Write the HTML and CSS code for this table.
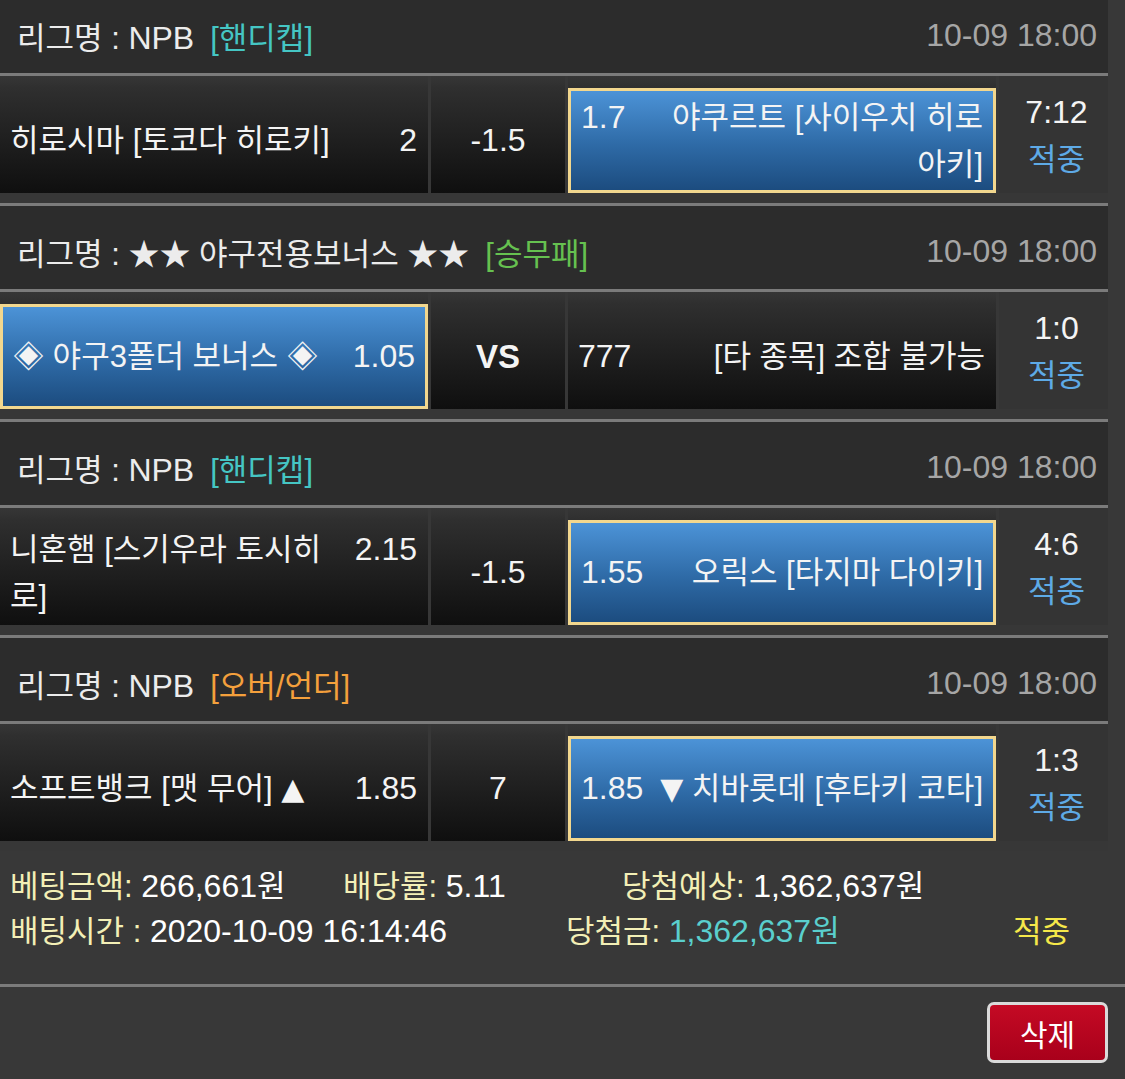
FILE: index.html
```html
<!DOCTYPE html>
<html lang="ko">
<head>
  <meta charset="UTF-8" />
  <meta name="viewport" content="width=device-width, initial-scale=1.0"/>
  <title>배팅내역</title>
  <link rel="stylesheet" href="styles.css">
</head>
<body>

  <div class="slip">

    <div class="game">
      <div class="league">
        <div class="league-title">리그명 : <span class="num">NPB</span><span class="bet-type handi">[핸디캡]</span></div>
        <div class="league-date">10-09 18:00</div>
      </div>
      <div class="match">
        <div class="cell home">
          <div class="cell-body">
            <div class="pick">
              <div class="pick-name">히로시마 [토코다 히로키]</div>
              <div class="pick-odds num">2</div>
            </div>
          </div>
        </div>
        <div class="cell line">
          <div class="cell-body num">-1.5</div>
        </div>
        <div class="cell away">
          <div class="cell-body selected">
            <div class="pick">
              <div class="pick-odds num">1.7</div>
              <div class="pick-name">야쿠르트 [사이우치 히로아키]</div>
            </div>
          </div>
        </div>
        <div class="result">
          <div class="score num">7:12</div>
          <div class="status">적중</div>
        </div>
      </div>
    </div>

    <div class="game">
      <div class="league">
        <div class="league-title">리그명 : ★★ 야구전용보너스 ★★<span class="bet-type wdl">[승무패]</span></div>
        <div class="league-date">10-09 18:00</div>
      </div>
      <div class="match">
        <div class="cell home">
          <div class="cell-body selected">
            <div class="pick">
              <div class="pick-name">◈ 야구3폴더 보너스 ◈</div>
              <div class="pick-odds num">1.05</div>
            </div>
          </div>
        </div>
        <div class="cell line">
          <div class="cell-body vs">VS</div>
        </div>
        <div class="cell away">
          <div class="cell-body">
            <div class="pick">
              <div class="pick-odds num">777</div>
              <div class="pick-name">[타 종목] 조합 불가능</div>
            </div>
          </div>
        </div>
        <div class="result">
          <div class="score num">1:0</div>
          <div class="status">적중</div>
        </div>
      </div>
    </div>

    <div class="game">
      <div class="league">
        <div class="league-title">리그명 : <span class="num">NPB</span><span class="bet-type handi">[핸디캡]</span></div>
        <div class="league-date">10-09 18:00</div>
      </div>
      <div class="match">
        <div class="cell home">
          <div class="cell-body">
            <div class="pick">
              <div class="pick-name">니혼햄 [스기우라 토시히로]</div>
              <div class="pick-odds num">2.15</div>
            </div>
          </div>
        </div>
        <div class="cell line">
          <div class="cell-body num">-1.5</div>
        </div>
        <div class="cell away">
          <div class="cell-body selected">
            <div class="pick">
              <div class="pick-odds num">1.55</div>
              <div class="pick-name">오릭스 [타지마 다이키]</div>
            </div>
          </div>
        </div>
        <div class="result">
          <div class="score num">4:6</div>
          <div class="status">적중</div>
        </div>
      </div>
    </div>

    <div class="game last">
      <div class="league">
        <div class="league-title">리그명 : <span class="num">NPB</span><span class="bet-type ou">[오버/언더]</span></div>
        <div class="league-date">10-09 18:00</div>
      </div>
      <div class="match">
        <div class="cell home">
          <div class="cell-body">
            <div class="pick">
              <div class="pick-name">소프트뱅크 [맷 무어] <span class="arrow">▲</span></div>
              <div class="pick-odds num">1.85</div>
            </div>
          </div>
        </div>
        <div class="cell line">
          <div class="cell-body num">7</div>
        </div>
        <div class="cell away">
          <div class="cell-body selected">
            <div class="pick">
              <div class="pick-odds num">1.85</div>
              <div class="pick-name"><span class="arrow">▼</span> 치바롯데 [후타키 코타]</div>
            </div>
          </div>
        </div>
        <div class="result">
          <div class="score num">1:3</div>
          <div class="status">적중</div>
        </div>
      </div>
    </div>

    <div class="summary">
      <div class="sum-line">
        <div class="sum-item w1">베팅금액: <span class="val num">266,661</span><span class="val">원</span></div>
        <div class="sum-item w2">배당률: <span class="val num">5.11</span></div>
        <div class="sum-item">당첨예상: <span class="val num">1,362,637</span><span class="val">원</span></div>
      </div>
      <div class="sum-line">
        <div class="sum-item w3">배팅시간 : <span class="val num">2020-10-09 16:14:46</span></div>
        <div class="sum-item w4">당첨금: <span class="win num">1,362,637</span><span class="win">원</span></div>
        <div class="sum-item hit">적중</div>
      </div>
    </div>

    <div class="actions">
      <button type="button" class="btn-delete">삭제</button>
    </div>

  </div>

</body>
</html>
```

FILE: styles.css
```css
body {
  margin: 0;
  padding: 0;
  background-color: #383838;
  font-family: 'Liberation Sans', 'Noto Sans CJK KR', sans-serif;
  font-size: 31px;
  color: #f4f4f4;
  overflow: hidden;
}

.slip {
  margin-top: -10px;
}

.num {
  font-size: 32px;
}

.arrow {
  font-family: 'DejaVu Sans', sans-serif;
  font-size: 30px;
}

/* league header */
.game {
  width: 1108px;
}

.league {
  height: 86px;
  box-sizing: border-box;
  padding: 8px 11px 0 17px;
  display: flex;
  align-items: center;
  justify-content: space-between;
  background: #2c2c2c;
  border-bottom: 3px solid #7b7b7b;
  color: #ececec;
}

.bet-type {
  margin-left: 16px;
}

.bet-type.handi { color: #45c6c4; }
.bet-type.wdl { color: #66c150; }
.bet-type.ou { color: #f4a03c; }

.league-date {
  font-size: 32px;
  color: #a6a6a6;
}

/* match row */
.match {
  height: 130px;
  box-sizing: border-box;
  padding-bottom: 10px;
  display: flex;
  gap: 3px;
  background: #373737;
  border-bottom: 3px solid #7b7b7b;
}

.game.last .match {
  height: 127px;
  border-bottom: none;
}

.cell {
  display: flex;
  padding-top: 12px;
  background: linear-gradient(to bottom, #363636 0px, #2f2f2f 12px, #0f0f0f 100%);
}

.cell.home,
.cell.away {
  width: 428px;
}

.cell.line {
  width: 134px;
}

.cell-body {
  flex: 1;
  display: flex;
  align-items: center;
  padding: 0 11px 0 10px;
  line-height: 47px;
}

.cell.line .cell-body {
  justify-content: center;
  padding: 0;
}

.cell-body.vs {
  font-weight: bold;
  font-size: 33px;
}

.cell-body.selected {
  padding: 0 10px;
  border: 3px solid #f2d78e;
  background: linear-gradient(to bottom, #4c93d7, #2e6aa6 55%, #1c4c7f);
}

.pick {
  flex: 1;
  display: flex;
  align-items: baseline;
}

.pick-odds {
  flex: none;
  width: 74px;
}

.pick-name {
  flex: 1;
  min-width: 0;
}

.cell.home .pick-odds,
.cell.away .pick-name {
  text-align: right;
}

.result {
  flex: 1;
  display: flex;
  flex-direction: column;
  align-items: center;
  justify-content: center;
  padding: 2px 0 0 6px;
  line-height: 47px;
  background: #343434;
}

.status {
  color: #5eaae6;
}

/* summary */
.summary {
  padding: 13px 0 30px 10px;
  line-height: 45px;
  color: #f3efb6;
}

.sum-line {
  display: flex;
}

.sum-item.w1 { width: 333px; }
.sum-item.w2 { width: 279px; }
.sum-item.w3 { width: 556px; }
.sum-item.w4 { width: 447px; }

.sum-item .val {
  color: #fff;
}

.sum-item .win {
  color: #5acfcd;
}

.sum-item.hit {
  color: #f5e84a;
}

.actions {
  border-top: 3px solid #7b7b7b;
  padding: 15px 17px;
  display: flex;
  justify-content: flex-end;
}

.btn-delete {
  width: 121px;
  height: 61px;
  border: 3px solid #dadada;
  border-radius: 7px;
  background: linear-gradient(to bottom, #c40a24, #a9001b);
  color: #fff;
  font-family: inherit;
  font-size: 30px;
  cursor: pointer;
}
```
